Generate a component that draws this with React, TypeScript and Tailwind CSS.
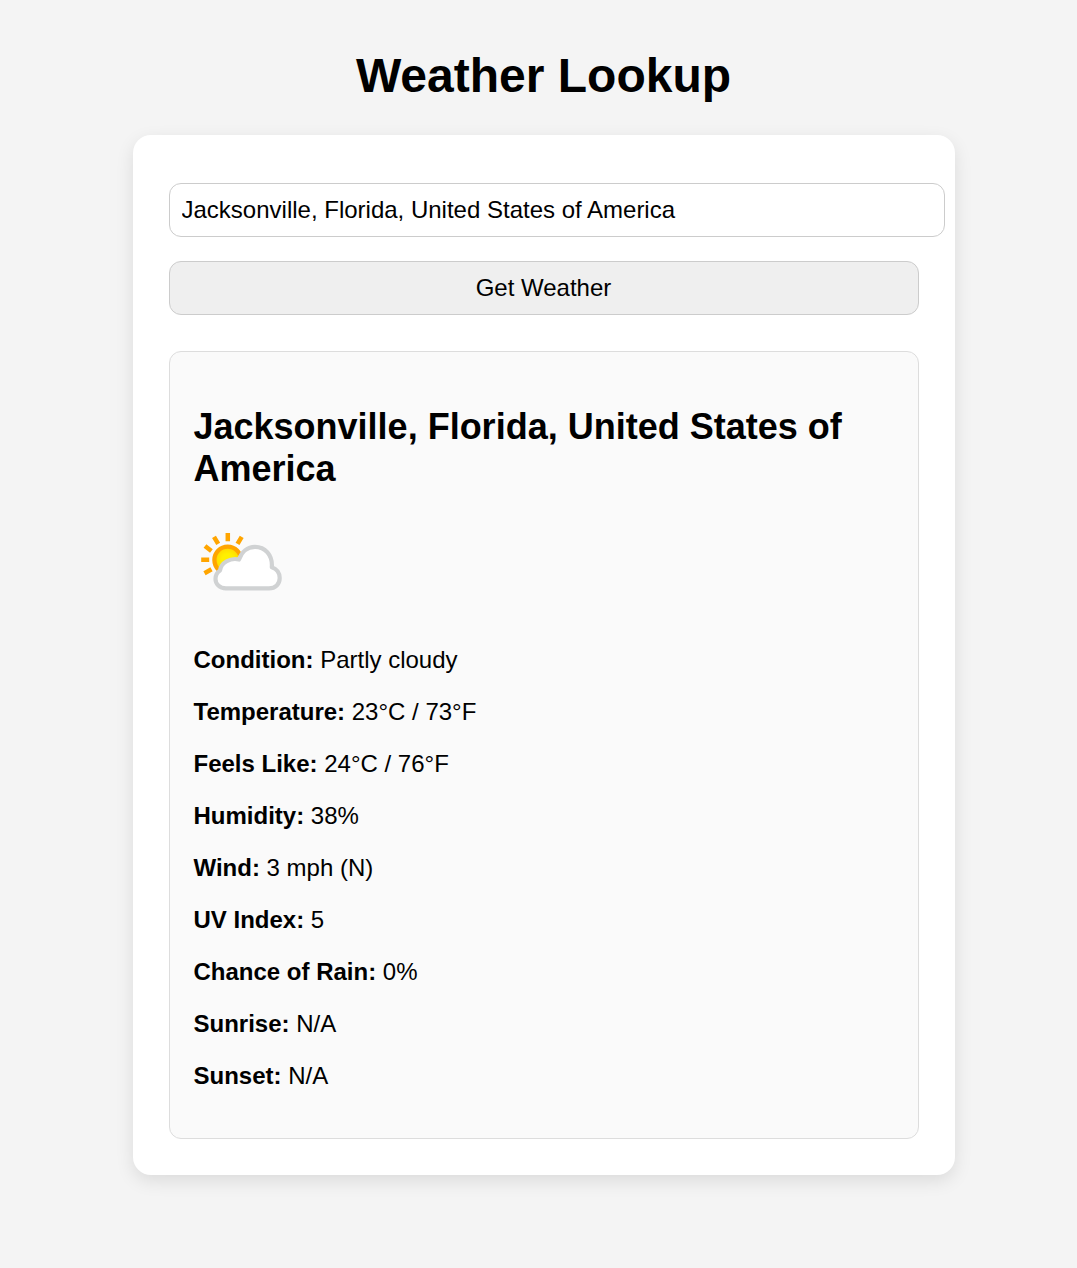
const rows: [string, string][] = [
  ["Condition:", "Partly cloudy"],
  ["Temperature:", "23°C / 73°F"],
  ["Feels Like:", "24°C / 76°F"],
  ["Humidity:", "38%"],
  ["Wind:", "3 mph (N)"],
  ["UV Index:", "5"],
  ["Chance of Rain:", "0%"],
  ["Sunrise:", "N/A"],
  ["Sunset:", "N/A"],
];

function PartlyCloudy() {
  return (
    <svg className="mt-6 block h-24 w-24 blur-[0.5px]" viewBox="0 0 96 96" fill="none">
      <defs>
        <radialGradient id="sun">
          <stop offset="0.45" stopColor="#fff000" />
          <stop offset="1" stopColor="#ffd500" />
        </radialGradient>
      </defs>
      <path
        d="M33.800 19v8.200M47.700 22.800l-4.200 7M20 22.800l4.200 7M11 32.100l6.400 5M7.200 45.800h8M10.500 59.200l7-4"
        stroke="#ffa500"
        strokeWidth="4.500"
      />
      <circle cx="33.700" cy="46" r="13.300" fill="url(#sun)" stroke="#ffa500" strokeWidth="4.300" />
      <path
        d="M32 74.400C25.500 74.400 21.500 70 21.500 65C21.500 61 23.200 58.300 26 56.500C27 48.500 36.500 43.500 45 45.500C47.500 38 53.500 32.800 61 32.800C70.800 32.800 78.800 41 77.800 53.200C82.700 54.700 85.700 59 85.700 64C85.700 70 81.500 74.400 75 74.400Z"
        fill="#fff"
        stroke="#d0d2d3"
        strokeWidth="4.200"
        strokeLinejoin="round"
      />
    </svg>
  );
}

export default function App() {
  return (
    <div className="min-h-[1268px] bg-[#f4f4f4] pt-12 font-['Liberation_Sans',Arial,sans-serif] text-2xl leading-7 text-black">
      <h1 className="ml-[10px] text-center text-5xl leading-[55px] font-bold">Weather Lookup</h1>
      <main className="mt-8 ml-[133px] w-[822px] rounded-[18px] bg-white px-9 pt-12 pb-9 shadow-[0_6px_18px_rgba(0,0,0,0.1)]">
        <input
          className="block h-[54px] w-[776px] rounded-xl border border-[#ccc] bg-white pr-3 pl-[11.5px] outline-none"
          defaultValue="Jacksonville, Florida, United States of America"
        />
        <button className="mt-6 block h-[54px] w-full rounded-xl border border-[#ccc] bg-[#efefef] pr-px">Get Weather</button>
        <section className="mt-9 h-[788px] rounded-xl border border-[#ddd] bg-[#fafafa] pt-[54px] pr-6 pl-[23.5px]">
          <h2 className="text-4xl leading-[42px] font-bold">Jacksonville, Florida, United States of America</h2>
          <PartlyCloudy />
          <div className="mt-9 flex flex-col gap-6">
            {rows.map(([label, value]) => (
              <p key={label}>
                <strong>{label}</strong> {value}
              </p>
            ))}
          </div>
        </section>
      </main>
    </div>
  );
}
